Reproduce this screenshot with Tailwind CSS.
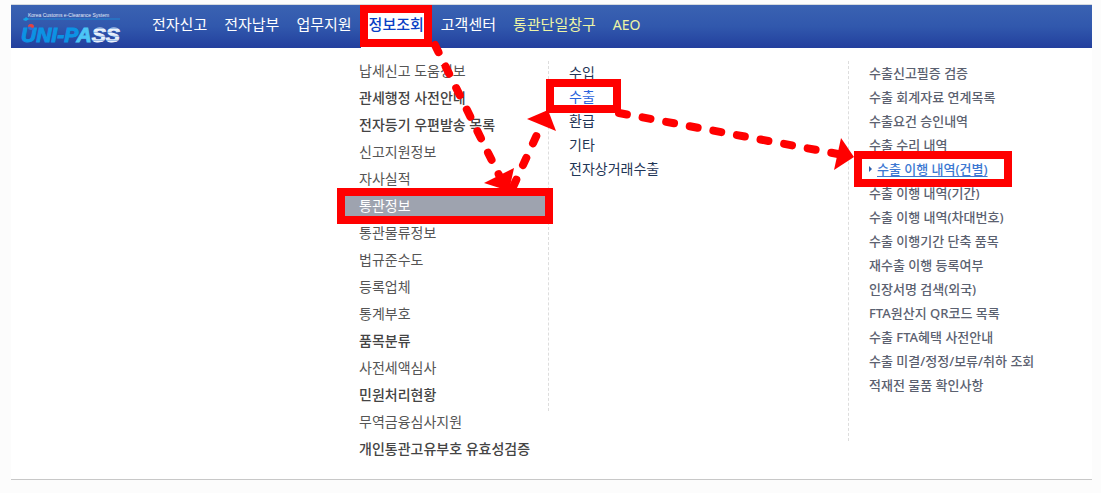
<!DOCTYPE html>
<html lang="ko">
<head>
    <meta charset="UTF-8">
    <meta name="viewport" content="width=device-width, initial-scale=1.0">
    <title>UNI-PASS 정보조회</title>
    <script src="https://cdn.jsdelivr.net/npm/@tailwindcss/browser@4"></script>
</head>
<body class="min-h-screen bg-[#fcfcfc] font-['Noto_Sans','Noto_Sans_CJK_KR',sans-serif]">
<div class="relative pt-1 pl-[11px] pr-[9px]">
    <header class="flex h-11 border-t border-[#d5dade] bg-linear-to-b from-[#3a62b2] via-[#3158ad] to-[#233f9d]">
        <!-- 로고 -->
        <a href="#" class="block w-[133px] shrink-0" aria-label="UNI-PASS">
            <svg class="h-[43px] w-[133px]" viewBox="0 0 133 43">
                <defs>
                    <linearGradient id="stripe" gradientUnits="userSpaceOnUse" x1="0" y1="20" x2="0" y2="24" spreadMethod="repeat">
                        <stop offset="0" stop-color="#f2f7fd"/>
                        <stop offset="0.6" stop-color="#dce8f7"/>
                        <stop offset="1" stop-color="#7fa9de"/>
                    </linearGradient>
                </defs>
                <text x="17" y="12" font-family="Liberation Sans" font-size="5" fill="#e3ebf8">Korea Customs e-Clearance System</text>
                <path d="M12 14H109" stroke="#1f86d3" stroke-width="1"/>
                <path d="M12 15L15 12L18 14L15 16Z" fill="#14a3e6"/>
                <text x="10" y="37" font-family="Liberation Sans" font-size="21" font-weight="bold" font-style="italic"><tspan fill="#0c93e4" stroke="#0c93e4">UNI-P</tspan><tspan fill="#4cc6f6" stroke="#4cc6f6">A</tspan><tspan fill="url(#stripe)" stroke="url(#stripe)">SS</tspan></text>
                <circle cx="20" cy="22" r="3" fill="#2f6fd8"/>
                <path d="M17 22A3 3 0 0 1 23 22Q21 24 20 22Q18 21 17 22Z" fill="#e8413c"/>
            </svg>
        </a>
        <nav class="flex gap-px text-[15px] text-white">
            <a href="#" class="flex items-center px-2 pb-1">전자신고</a>
            <a href="#" class="flex items-center px-2 pb-1">전자납부</a>
            <a href="#" class="flex items-center px-2 pb-1">업무지원</a>
            <a href="#" class="flex items-center bg-white px-2 pb-1 font-medium text-[#0a3fc4]">정보조회</a>
            <a href="#" class="flex items-center px-2 pb-1">고객센터</a>
            <a href="#" class="flex items-center px-2 pb-1 text-[#eef5a5]">통관단일창구</a>
            <a href="#" class="flex items-center px-2 pb-1 text-sm text-[#eef5a5]">AEO</a>
        </nav>
    </header>

    <main class="flex border-b border-[#c8c8c8] bg-white pl-[334px] pt-[9px] pb-[17px]">
        <ul class="w-[200px] shrink-0 text-sm leading-[27px] whitespace-nowrap text-[#555]">
            <li><a href="#" class="block pl-[14px]">납세신고 도움정보</a></li>
            <li><a href="#" class="block pl-[14px] font-medium text-[#444]">관세행정 사전안내</a></li>
            <li><a href="#" class="block pl-[14px] font-medium text-[#444]">전자등기 우편발송 목록</a></li>
            <li><a href="#" class="block pl-[14px]">신고지원정보</a></li>
            <li><a href="#" class="block pl-[14px]">자사실적</a></li>
            <li><a href="#" class="block bg-[#9ea3af] pl-[14px] text-white">통관정보</a></li>
            <li><a href="#" class="block pl-[14px]">통관물류정보</a></li>
            <li><a href="#" class="block pl-[14px]">법규준수도</a></li>
            <li><a href="#" class="block pl-[14px]">등록업체</a></li>
            <li><a href="#" class="block pl-[14px]">통계부호</a></li>
            <li><a href="#" class="block pl-[14px] font-medium text-[#444]">품목분류</a></li>
            <li><a href="#" class="block pl-[14px]">사전세액심사</a></li>
            <li><a href="#" class="block pl-[14px] font-medium text-[#444]">민원처리현황</a></li>
            <li><a href="#" class="block pl-[14px]">무역금융심사지원</a></li>
            <li><a href="#" class="block pl-[14px] font-medium text-[#444]">개인통관고유부호 유효성검증</a></li>
        </ul>

        <ul class="mt-1 ml-[3px] h-[350px] w-[300px] shrink-0 border-l border-dashed border-[#ddd] pl-5 text-sm leading-6 text-[#1f3556]">
            <li><a href="#">수입</a></li>
            <li><a href="#" class="text-[#2a62dc]">수출</a></li>
            <li><a href="#">환급</a></li>
            <li><a href="#">기타</a></li>
            <li><a href="#">전자상거래수출</a></li>
        </ul>

        <ul class="mt-1 h-[380px] border-l border-dashed border-[#ddd] pl-5 text-[13px] leading-6 font-medium whitespace-nowrap text-[#5b6170]">
            <li><a href="#">수출신고필증 검증</a></li>
            <li><a href="#">수출 회계자료 연계목록</a></li>
            <li><a href="#">수출요건 승인내역</a></li>
            <li><a href="#">수출 수리 내역</a></li>
            <li class="flex items-center gap-[5px] text-[#3c78d2]">
                <svg class="h-[6px] w-[3px]" viewBox="0 0 3 6" fill="#2a5fae"><path d="M0 0L3 3L0 6Z"/></svg>
                <a href="#" class="underline underline-offset-2">수출 이행 내역(건별)</a>
            </li>
            <li><a href="#">수출 이행 내역(기간)</a></li>
            <li><a href="#">수출 이행 내역(차대번호)</a></li>
            <li><a href="#">수출 이행기간 단축 품목</a></li>
            <li><a href="#">재수출 이행 등록여부</a></li>
            <li><a href="#">인장서명 검색(외국)</a></li>
            <li><a href="#">FTA원산지 QR코드 목록</a></li>
            <li><a href="#">수출 FTA혜택 사전안내</a></li>
            <li><a href="#">수출 미결/정정/보류/취하 조회</a></li>
            <li><a href="#">적재전 물품 확인사항</a></li>
        </ul>
    </main>

    <!-- 메뉴 경로 표시 -->
    <svg class="pointer-events-none absolute top-0 left-0 h-[493px] w-[1101px]" viewBox="0 0 1101 493" fill="none" stroke="#f00" stroke-width="8">
        <rect x="364" y="9" width="64" height="34"/>
        <rect x="341" y="192" width="208" height="28"/>
        <rect x="550" y="83" width="67" height="26"/>
        <rect x="858" y="155" width="150" height="28"/>
        <g stroke-linecap="round" stroke-dasharray="8 16">
            <path d="M435 45L500 177"/>
            <path d="M513 187L540 128"/>
            <path d="M619 113L838 154"/>
        </g>
        <g fill="#f00" stroke="none">
            <path d="M484 183L514 168L509 191Z"/>
            <path d="M527 119L556 131L548 110Z"/>
            <path d="M841 138L834 170L854 157Z"/>
        </g>
    </svg>
</div>
</body>
</html>
